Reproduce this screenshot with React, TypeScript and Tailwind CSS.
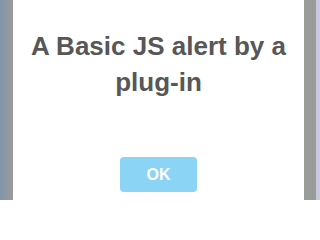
export default function App() {
  return (
    <div className="flex w-[320px] h-[200px] overflow-hidden font-['Liberation_Sans',Arial,sans-serif]">
      <div className="w-[13px] h-full bg-gradient-to-r from-[#7f95ab] to-[#9c9b96]" />
      <div className="flex-1 h-full bg-white flex flex-col items-center">
        <h2 className="mt-[28px] text-[26px] leading-[36px] font-bold text-[#575757] text-center">
          A Basic JS alert by a
          <br />
          plug-in
        </h2>
        <button className="mt-[57px] w-[77px] h-[35px] rounded-[4px] bg-[#8cd4f5] text-white text-[16px] font-bold">
          OK
        </button>
      </div>
      <div className="w-[12px] h-full bg-[#9a9c99]" />
      <div className="w-[4px] h-full bg-[#c9c9de]" />
    </div>
  );
}
